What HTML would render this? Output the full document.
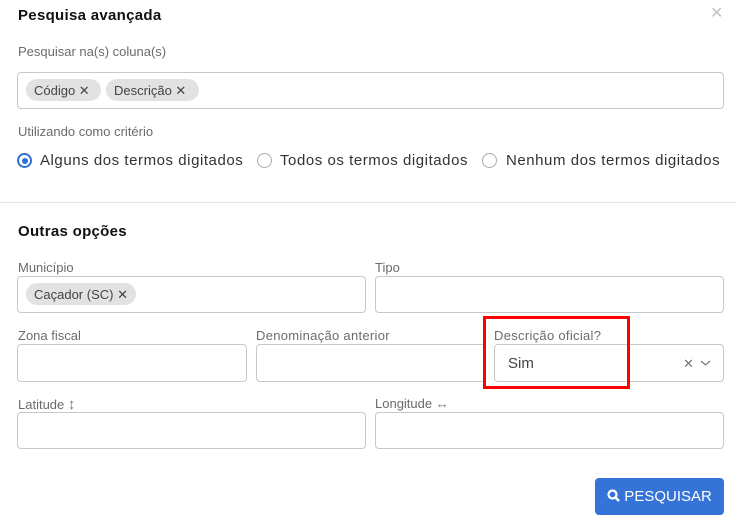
<!DOCTYPE html>
<html><head><meta charset="utf-8"><style>
*{box-sizing:border-box;margin:0;padding:0}
body{width:737px;height:525px;background:#fff;font-family:"Liberation Sans","DejaVu Sans",sans-serif;position:relative;overflow:hidden;color:#222}
.a{position:absolute}
.t{font-weight:bold;font-size:15px;color:#111;letter-spacing:0.3px}
.l{font-size:13px;color:#6b6b6b}
.in{position:absolute;border:1px solid #c8c8c8;border-radius:4px;background:#fff}
.chip{position:absolute;height:22px;border-radius:11px;background:#e2e2e2;font-size:13px;color:#444;line-height:23px;padding:0 8px;white-space:nowrap}
.r{font-size:15px;color:#333;line-height:18px;letter-spacing:0.55px}
.rd{position:absolute;width:15px;height:15px;border-radius:50%;border:1.5px solid #aaa}
</style></head><body>
<div class="a t" style="left:18px;top:7px">Pesquisa avançada</div>
<div class="a" style="left:710px;top:3px;font-size:16px;color:#c4c4c4">✕</div>
<div class="a l" style="left:18px;top:44px">Pesquisar na(s) coluna(s)</div>
<div class="in" style="left:17px;top:72px;width:707px;height:37px"></div>
<div class="chip" style="left:26px;top:79px;width:75px">Código ✕</div>
<div class="chip" style="left:106px;top:79px;width:93px">Descrição ✕</div>
<div class="a l" style="left:18px;top:124px">Utilizando como critério</div>
<div class="rd" style="left:17px;top:153px;border-color:#2f6fd6;border-width:2px"><div style="position:absolute;left:2.5px;top:2.5px;width:6px;height:6px;border-radius:50%;background:#2f6fd6"></div></div>
<div class="a r" style="left:40px;top:152px">Alguns dos termos digitados</div>
<div class="rd" style="left:257px;top:153px"></div>
<div class="a r" style="left:280px;top:152px">Todos os termos digitados</div>
<div class="rd" style="left:482px;top:153px"></div>
<div class="a r" style="left:506px;top:152px">Nenhum dos termos digitados</div>
<div class="a" style="left:0;top:202px;width:737px;height:1px;background:#e5e5e5"></div>
<div class="a t" style="left:18px;top:223px">Outras opções</div>
<div class="a l" style="left:18px;top:260px">Município</div>
<div class="a l" style="left:375px;top:260px">Tipo</div>
<div class="in" style="left:17px;top:276px;width:349px;height:37px"></div>
<div class="chip" style="left:26px;top:283px;width:110px">Caçador (SC) ✕</div>
<div class="in" style="left:375px;top:276px;width:349px;height:37px"></div>
<div class="a l" style="left:18px;top:328px">Zona fiscal</div>
<div class="a l" style="left:256px;top:328px;letter-spacing:0.3px">Denominação anterior</div>
<div class="a l" style="left:494px;top:328px;letter-spacing:0.3px">Descrição oficial?</div>
<div class="in" style="left:17px;top:344px;width:230px;height:38px"></div>
<div class="in" style="left:256px;top:344px;width:230px;height:38px"></div>
<div class="in" style="left:494px;top:344px;width:230px;height:38px"></div>
<div class="a" style="left:508px;top:355px;font-size:15px;color:#444">Sim</div>
<div class="a" style="left:683px;top:356px;font-size:13px;color:#777">✕</div>
<svg class="a" style="left:700px;top:359px" width="11" height="8"><path d="M1 2l4.5 4 4.5-4" fill="none" stroke="#777" stroke-width="1.2"/></svg>
<div class="a" style="left:483px;top:316px;width:147px;height:73px;border:3px solid #f00"></div>
<div class="a l" style="left:18px;top:396px">Latitude <span style="color:#777;font-size:15px">↕</span></div>
<div class="a l" style="left:375px;top:396px">Longitude <span style="color:#777">↔</span></div>
<div class="in" style="left:17px;top:412px;width:349px;height:37px"></div>
<div class="in" style="left:375px;top:412px;width:349px;height:37px"></div>
<div class="a" style="left:595px;top:478px;width:129px;height:37px;background:#3574d6;border-radius:4px;color:#fff;font-size:15px;line-height:37px;text-align:center"><svg width="13" height="13" style="vertical-align:-1px"><circle cx="5.5" cy="5.5" r="4" fill="none" stroke="#fff" stroke-width="2.2"/><path d="M8.5 8.5l3.5 3.5" stroke="#fff" stroke-width="2.5"/></svg> PESQUISAR</div>
</body></html>
